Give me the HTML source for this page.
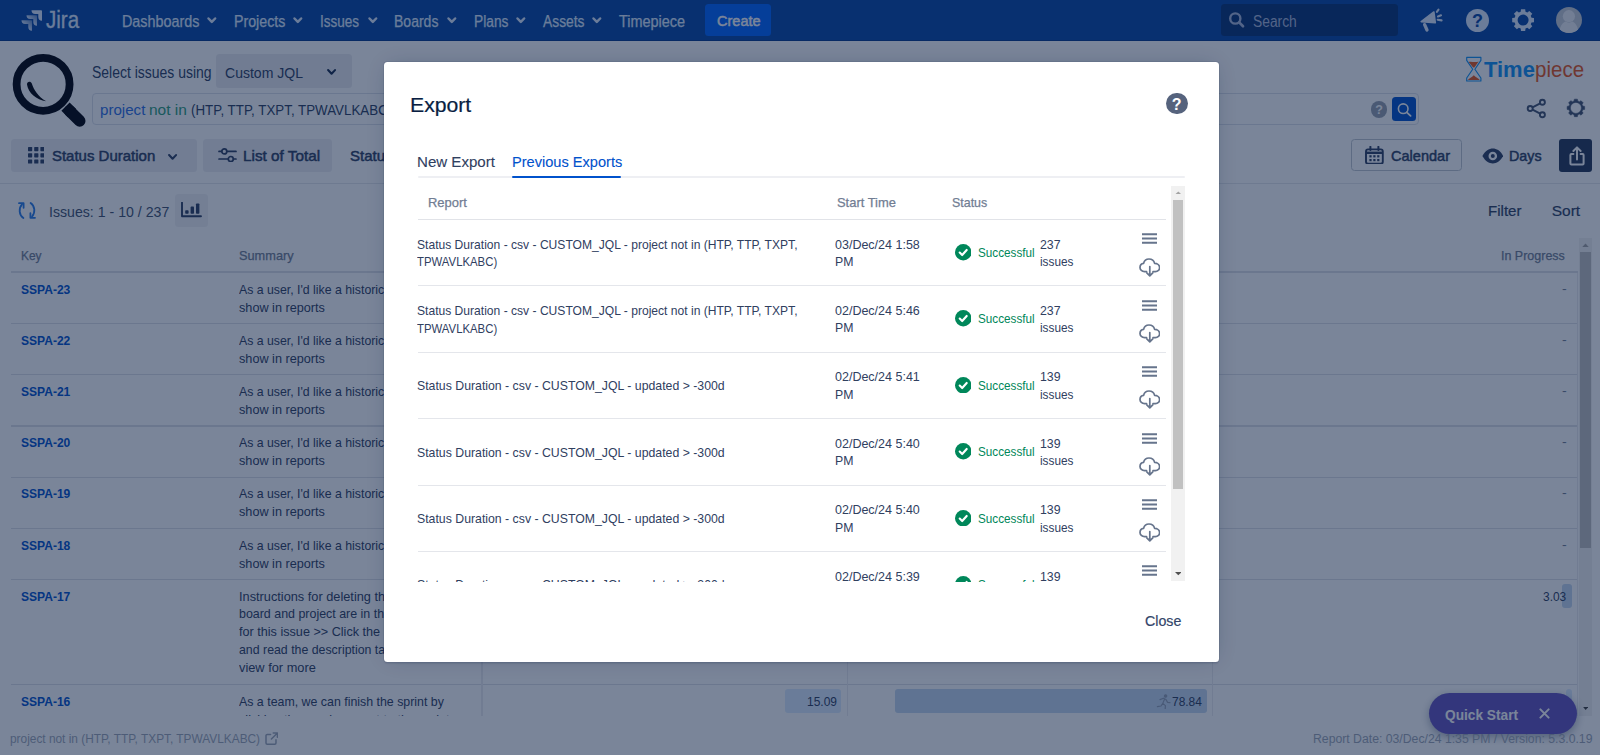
<!DOCTYPE html>
<html lang="en"><head><meta charset="utf-8"><title>Timepiece - Export</title>
<style>
html,body{margin:0;padding:0;}
body{width:1600px;height:755px;overflow:hidden;background:#fff;font-family:"Liberation Sans", sans-serif;position:relative;}
.a{position:absolute;display:block;}
.t{position:absolute;white-space:pre;display:block;transform-origin:0 50%;}
#page,#blanket,#modal{position:absolute;left:0;top:0;width:1600px;height:755px;overflow:hidden;}
#blanket{background:rgba(9,30,66,.54);}
</style></head><body>
<div id="page">
<div class="a" style="left:0px;top:0px;width:1600.00px;height:41.20px;background:#0747A6;"></div>
<div class="a" style="left:0px;top:39.8px;width:1600.00px;height:1.40px;background:#053A8C;"></div>
<svg class="a" style="left:20px;top:9px" width="24.00" height="24.00" viewBox="20 9 24 24"><defs><linearGradient id="jg" x1="1" y1="0" x2="0.35" y2="0.65"><stop offset="0.1" stop-color="#DEEBFF" stop-opacity=".45"/><stop offset="1" stop-color="#DEEBFF"/></linearGradient></defs><path d="M21.5 20.25 a3.7 3.7 0 0 0 3.7 3.7 h3.1 v3.1 a3.7 3.7 0 0 0 3.7 3.7 V21.05 a.8 .8 0 0 0 -.8 -.8Z" fill="url(#jg)"/><path d="M26.5 15.25 a3.7 3.7 0 0 0 3.7 3.7 h3.1 v3.1 a3.7 3.7 0 0 0 3.7 3.7 V16.05 a.8 .8 0 0 0 -.8 -.8Z" fill="url(#jg)"/><path d="M31.5 10.25 a3.7 3.7 0 0 0 3.7 3.7 h3.1 v3.1 a3.7 3.7 0 0 0 3.7 3.7 V11.05 a.8 .8 0 0 0 -.8 -.8Z" fill="#DEEBFF"/></svg>
<svg class="a" style="left:206.32px;top:16.00px" width="11.65" height="8.43" viewBox="-2.50 -2.50 11.65 8.43"><path d="M0 0 L3.33 3.42 L6.65 0" fill="none" stroke="#DEEBFF" stroke-width="2.5" stroke-linecap="round" stroke-linejoin="round"/></svg>
<svg class="a" style="left:292.32px;top:16.00px" width="11.65" height="8.43" viewBox="-2.50 -2.50 11.65 8.43"><path d="M0 0 L3.33 3.42 L6.65 0" fill="none" stroke="#DEEBFF" stroke-width="2.5" stroke-linecap="round" stroke-linejoin="round"/></svg>
<svg class="a" style="left:366.52px;top:16.00px" width="11.65" height="8.43" viewBox="-2.50 -2.50 11.65 8.43"><path d="M0 0 L3.33 3.42 L6.65 0" fill="none" stroke="#DEEBFF" stroke-width="2.5" stroke-linecap="round" stroke-linejoin="round"/></svg>
<svg class="a" style="left:445.93px;top:16.00px" width="11.65" height="8.43" viewBox="-2.50 -2.50 11.65 8.43"><path d="M0 0 L3.33 3.42 L6.65 0" fill="none" stroke="#DEEBFF" stroke-width="2.5" stroke-linecap="round" stroke-linejoin="round"/></svg>
<svg class="a" style="left:515.02px;top:16.00px" width="11.65" height="8.43" viewBox="-2.50 -2.50 11.65 8.43"><path d="M0 0 L3.33 3.42 L6.65 0" fill="none" stroke="#DEEBFF" stroke-width="2.5" stroke-linecap="round" stroke-linejoin="round"/></svg>
<svg class="a" style="left:591.12px;top:16.00px" width="11.65" height="8.43" viewBox="-2.50 -2.50 11.65 8.43"><path d="M0 0 L3.33 3.42 L6.65 0" fill="none" stroke="#DEEBFF" stroke-width="2.5" stroke-linecap="round" stroke-linejoin="round"/></svg>
<div class="a" style="left:705px;top:4px;width:66.20px;height:32.00px;background:#0065FF;border-radius:3.5px;"></div>
<div class="a" style="left:1221.3px;top:4.2px;width:176.40px;height:31.60px;background:#083376;border-radius:3.5px;"></div>
<svg class="a" style="left:1226px;top:10px" width="22.00" height="22.00" viewBox="1226 10 22 22"><circle cx="1235.3" cy="18.5" r="5.1" fill="none" stroke="#A9B8DA" stroke-width="2.4"/><path d="M1239.2 22.4 L1243 26.3" stroke="#A9B8DA" stroke-width="2.7" stroke-linecap="round"/></svg>
<svg class="a" style="left:1418px;top:7px" width="26.00" height="26.00" viewBox="1418 7 26 26"><g fill="#DEEBFF" stroke="#DEEBFF" stroke-linejoin="round"><path d="M1421.2 21.6 L1433.9 12 L1435.3 22.8 Z" stroke-width="1.6"/><path d="M1424.6 24.6 L1427 30" stroke-width="3.3" stroke-linecap="round" fill="none"/></g><g stroke="#DEEBFF" stroke-width="2.1" stroke-linecap="round"><path d="M1436.9 11.8 L1438.5 9.6"/><path d="M1438 16.5 L1441 15.3"/><path d="M1437.7 19.7 L1441.6 20.4"/></g></svg>
<div class="a" style="left:1466px;top:8.8px;width:23.00px;height:23.00px;background:#DEEBFF;border-radius:50%;"></div>
<svg class="a" style="left:1511.00px;top:7.90px" width="24.20" height="24.20" viewBox="-12.10 -12.10 24.20 24.20"><path d="M8.43 -2.42 L10.90 -2.10 L10.90 2.10 L8.43 2.42 L7.67 4.25 L9.19 6.23 L6.23 9.19 L4.25 7.67 L2.42 8.43 L2.10 10.90 L-2.10 10.90 L-2.42 8.43 L-4.25 7.67 L-6.23 9.19 L-9.19 6.23 L-7.67 4.25 L-8.43 2.42 L-10.90 2.10 L-10.90 -2.10 L-8.43 -2.42 L-7.67 -4.25 L-9.19 -6.23 L-6.23 -9.19 L-4.25 -7.67 L-2.42 -8.43 L-2.10 -10.90 L2.10 -10.90 L2.42 -8.43 L4.25 -7.67 L6.23 -9.19 L9.19 -6.23 L7.67 -4.25Z M5.50 0 A5.50 5.50 0 1 0 -5.50 0 A5.50 5.50 0 1 0 5.50 0Z" fill="#DEEBFF" fill-rule="evenodd"/></svg>
<svg class="a" style="left:1556.2px;top:7px" width="26.00" height="26.00" viewBox="0 0 26 26"><defs><clipPath id="av"><circle cx="13" cy="13" r="13"/></clipPath></defs><circle cx="13" cy="13" r="13" fill="#C6CCD6"/><g clip-path="url(#av)" fill="#EEF0F4"><circle cx="12.9" cy="9.2" r="6.1"/><path d="M3.4 27 C3.4 18 7.6 15.4 9.6 14.6 C11.6 16 14.2 16 16.2 14.6 C18.2 15.4 22.4 18 22.4 27 Z"/></g></svg>
<svg class="a" style="left:8px;top:50px" width="84.00" height="82.00" viewBox="8 50 84 82"><circle cx="43.1" cy="84.3" r="26.5" fill="none" stroke="#000208" stroke-width="7.8"/><path d="M69.6 110.8 L79.7 120.9" stroke="#000208" stroke-width="11.6" stroke-linecap="round"/><path d="M65.5 106.7 L72 113.2" stroke="#000208" stroke-width="11.6" stroke-linecap="butt"/><path d="M27 84.6 C26.6 81.6 30.6 80.6 31.8 83.4 C34 90 38 96.4 46.2 101.2 C36.4 100.2 28.2 93 27 84.6Z" fill="#000208"/></svg>
<div class="a" style="left:216px;top:54px;width:136.00px;height:33.60px;background:#EBECF0;border-radius:3.5px;"></div>
<svg class="a" style="left:326.24px;top:68.34px" width="11.11" height="7.83" viewBox="-2.10 -2.10 11.11 7.83"><path d="M0 0 L3.46 3.62 L6.91 0" fill="none" stroke="#172B4D" stroke-width="2.1" stroke-linecap="round" stroke-linejoin="round"/></svg>
<div class="a" style="left:92px;top:93px;width:1326.80px;height:31.80px;box-sizing:border-box;border:1.6px solid #DCE0EA;border-radius:4px;background:#fff;"></div>
<div class="a" style="left:1370.8px;top:101.4px;width:16.20px;height:16.20px;background:#97A0AF;border-radius:50%;"></div>
<div class="a" style="left:1391.6px;top:96.8px;width:24.50px;height:24.70px;background:#0052CC;border-radius:3.5px;"></div>
<svg class="a" style="left:1395px;top:100px" width="20.00" height="20.00" viewBox="1395 100 20 20"><circle cx="1403.2" cy="108.7" r="4.8" fill="none" stroke="#fff" stroke-width="1.6"/><path d="M1406.8 112.3 L1410.6 115.9" stroke="#fff" stroke-width="1.8" stroke-linecap="round"/></svg>
<svg class="a" style="left:1464px;top:54px" width="20.00" height="30.00" viewBox="1464 54 20 30"><path d="M1468.6 62 C1471 60.8 1474.6 63 1478.6 61.6 L1474.4 67.6 H1473.2 Z" fill="#E8571C"/><path d="M1467.8 80 C1469.4 77.6 1471.6 77.8 1473.8 75.2 C1476 77.8 1478.2 77.6 1479.8 80 Z" fill="#E8571C"/><path d="M1466.7 57.4 H1480.9 V60.4 L1474.9 69.2 L1480.9 78 V81 H1466.7 V78 L1472.7 69.2 L1466.7 60.4 Z" fill="none" stroke="#1292F4" stroke-width="1.15" stroke-linejoin="round"/></svg>
<svg class="a" style="left:1525.8px;top:98px" width="21.00" height="21.00" viewBox="0 0 21 21"><g fill="none" stroke="#42526E" stroke-width="1.9"><circle cx="16.4" cy="4.2" r="2.5"/><circle cx="4.2" cy="10.5" r="2.5"/><circle cx="16.4" cy="16.8" r="2.5"/><path d="M6.5 9.3 L14.2 5.3 M6.5 11.7 L14.2 15.7"/></g></svg>
<svg class="a" style="left:1565.80px;top:98.40px" width="19.80" height="19.80" viewBox="-9.90 -9.90 19.80 19.80"><path d="M6.86 -1.90 L8.77 -1.51 L8.77 1.51 L6.86 1.90 L6.20 3.51 L7.27 5.14 L5.14 7.27 L3.51 6.20 L1.90 6.86 L1.51 8.77 L-1.51 8.77 L-1.90 6.86 L-3.51 6.20 L-5.14 7.27 L-7.27 5.14 L-6.20 3.51 L-6.86 1.90 L-8.77 1.51 L-8.77 -1.51 L-6.86 -1.90 L-6.20 -3.51 L-7.27 -5.14 L-5.14 -7.27 L-3.51 -6.20 L-1.90 -6.86 L-1.51 -8.77 L1.51 -8.77 L1.90 -6.86 L3.51 -6.20 L5.14 -7.27 L7.27 -5.14 L6.20 -3.51Z M5.50 0 A5.50 5.50 0 1 0 -5.50 0 A5.50 5.50 0 1 0 5.50 0Z" fill="#42526E" fill-rule="evenodd" stroke="#42526E" stroke-width=".5" stroke-linejoin="round"/></svg>
<div class="a" style="left:11.3px;top:139px;width:185.70px;height:33.00px;background:#EDEEF2;border-radius:3.5px;"></div>
<svg class="a" style="left:27.7px;top:147.2px" width="16.60" height="16.60" viewBox="0 0 16.6 16.6"><g fill="#2E3F62"><rect x="0.0" y="0.0" width="4.2" height="4.2" rx=".6"/><rect x="6.2" y="0.0" width="4.2" height="4.2" rx=".6"/><rect x="12.4" y="0.0" width="4.2" height="4.2" rx=".6"/><rect x="0.0" y="6.2" width="4.2" height="4.2" rx=".6"/><rect x="6.2" y="6.2" width="4.2" height="4.2" rx=".6"/><rect x="12.4" y="6.2" width="4.2" height="4.2" rx=".6"/><rect x="0.0" y="12.4" width="4.2" height="4.2" rx=".6"/><rect x="6.2" y="12.4" width="4.2" height="4.2" rx=".6"/><rect x="12.4" y="12.4" width="4.2" height="4.2" rx=".6"/></g></svg>
<svg class="a" style="left:166.84px;top:152.54px" width="11.11" height="7.83" viewBox="-2.10 -2.10 11.11 7.83"><path d="M0 0 L3.46 3.62 L6.91 0" fill="none" stroke="#2E3F62" stroke-width="2.1" stroke-linecap="round" stroke-linejoin="round"/></svg>
<div class="a" style="left:203px;top:139px;width:129.00px;height:33.00px;background:#EDEEF2;border-radius:3.5px;"></div>
<svg class="a" style="left:217.5px;top:148px" width="19.00" height="14.40" viewBox="0 0 19 14.4"><g fill="none" stroke="#2E3F62" stroke-width="1.7" stroke-linecap="round"><path d="M1 3.4 H3.6 M9 3.4 H18 M1 11 H10 M15.6 11 H18"/><circle cx="6.3" cy="3.4" r="2.5"/><circle cx="12.8" cy="11" r="2.5"/></g></svg>
<div class="a" style="left:1351px;top:139px;width:111.00px;height:32.40px;box-sizing:border-box;border:1px solid #C1C7D0;border-radius:3.5px;"></div>
<svg class="a" style="left:1365.4px;top:145.6px" width="18.80" height="18.80" viewBox="0 0 18.8 18.8"><rect x="1" y="3.4" width="16.8" height="14.4" rx="2" fill="none" stroke="#2E3F62" stroke-width="1.9"/><path d="M1 6.8 H17.8" stroke="#2E3F62" stroke-width="2.4"/><path d="M5.4 .8 V4 M13.4 .8 V4" stroke="#2E3F62" stroke-width="2" stroke-linecap="round"/><g fill="#2E3F62"><rect x="4.4" y="9.2" width="2.2" height="2.2"/><rect x="8.3" y="9.2" width="2.2" height="2.2"/><rect x="12.2" y="9.2" width="2.2" height="2.2"/><rect x="4.4" y="13" width="2.2" height="2.2"/><rect x="8.3" y="13" width="2.2" height="2.2"/><rect x="12.2" y="13" width="2.2" height="2.2"/></g></svg>
<svg class="a" style="left:1481.6px;top:147.6px" width="21.60" height="16.00" viewBox="0 0 21.6 16"><path d="M.4 8 C3.4 2.6 7 .6 10.8 .6 C14.6 .6 18.2 2.6 21.2 8 C18.2 13.4 14.6 15.4 10.8 15.4 C7 15.4 3.4 13.4 .4 8Z" fill="#2E3F62"/><circle cx="10.8" cy="8" r="4.3" fill="#fff"/><circle cx="10.8" cy="8" r="2" fill="#2E3F62"/></svg>
<div class="a" style="left:1559.3px;top:139px;width:32.90px;height:33.00px;background:#253858;border-radius:3px;"></div>
<svg class="a" style="left:1568.5px;top:145.5px" width="16.00" height="20.00" viewBox="0 0 16 20"><g fill="none" stroke="#fff" stroke-width="2" stroke-linejoin="round" stroke-linecap="round"><path d="M4.4 8 H2.4 a1 1 0 0 0 -1 1 V17.6 a1 1 0 0 0 1 1 H13.6 a1 1 0 0 0 1 -1 V9 a1 1 0 0 0 -1 -1 H11.6"/><path d="M8 13.4 V1.8 M4.4 5 L8 1.4 L11.6 5"/></g></svg>
<div class="a" style="left:0px;top:182.6px;width:1600.00px;height:1.00px;background:#E4E6EB;"></div>
<svg class="a" style="left:17.4px;top:200.6px" width="20.00" height="19.00" viewBox="0 0 20 19"><g fill="none" stroke="#2A7DE8" stroke-width="1.8" stroke-linecap="round" stroke-linejoin="round"><path d="M6.4 17 C2 14 1.4 7.4 5 3.4"/><path d="M2 2.2 H6.6 V6.8"/><path d="M13.6 2 C18 5 18.6 11.6 15 15.6"/><path d="M18 16.8 H13.4 V12.2"/></g></svg>
<div class="a" style="left:175px;top:194px;width:32.80px;height:32.60px;background:#F1F2F5;border-radius:3.5px;"></div>
<svg class="a" style="left:181.2px;top:202.4px" width="20.60" height="15.20" viewBox="0 0 20.6 15.2"><path d="M1 .6 V14.2 H20" fill="none" stroke="#2E3F62" stroke-width="1.9" stroke-linecap="round" stroke-linejoin="round"/><g fill="#2E3F62"><rect x="4.2" y="8.2" width="3.4" height="3.6" rx=".8"/><rect x="9.6" y="4.6" width="3.4" height="7.2" rx=".8"/><rect x="15" y="1.4" width="3.4" height="10.4" rx=".8"/></g></svg>
<div class="a" style="left:11px;top:271px;width:1566.50px;height:2.00px;background:#DFE1E6;"></div>
<div class="a" style="left:0;top:273px;width:1600px;height:442.6px;overflow:hidden"><div class="a" style="left:11px;top:49.9px;width:1566.50px;height:1.20px;background:#DFE1E6;"></div><div class="a" style="left:11px;top:101.20000000000002px;width:1566.50px;height:1.20px;background:#DFE1E6;"></div><div class="a" style="left:11px;top:152.4px;width:1566.50px;height:1.20px;background:#DFE1E6;"></div><div class="a" style="left:11px;top:203.70000000000002px;width:1566.50px;height:1.20px;background:#DFE1E6;"></div><div class="a" style="left:11px;top:254.9px;width:1566.50px;height:1.20px;background:#DFE1E6;"></div><div class="a" style="left:11px;top:305.9px;width:1566.50px;height:1.20px;background:#DFE1E6;"></div><div class="a" style="left:11px;top:410.9px;width:1566.50px;height:1.20px;background:#DFE1E6;"></div><div class="a" style="left:481.4px;top:0px;width:1.20px;height:443.00px;background:#EBECF0;"></div><div class="a" style="left:847.1999999999999px;top:0px;width:1.20px;height:443.00px;background:#EBECF0;"></div><div class="a" style="left:1211.8000000000002px;top:0px;width:1.20px;height:443.00px;background:#EBECF0;"></div><div class="a" style="left:1561.6px;top:311px;width:10.00px;height:23.70px;background:#C4D8F0;border-radius:3px;"></div><div class="a" style="left:1566px;top:416.20000000000005px;width:5.60px;height:23.60px;background:#DCECFF;border-radius:3px;"></div><div class="a" style="left:784.8px;top:416.20000000000005px;width:56.20px;height:23.60px;background:#DCECFF;border-radius:3px;"></div><div class="a" style="left:895.4px;top:416.20000000000005px;width:311.40px;height:23.60px;background:#C4D8F0;border-radius:3px;"></div><svg class="a" style="left:1155.6px;top:420.6px" width="15.40" height="15.40" viewBox="0 0 15.4 15.4"><g fill="none" stroke="#95A1B6" stroke-width="1.2" stroke-linecap="round" stroke-linejoin="round"><circle cx="9.6" cy="2" r="1.2" fill="#95A1B6"/><path d="M4 5.6 L7.4 4.2 L10 5.6 L11.6 8.4 L14 8.6 M8.6 5 L6.8 9.4 L9.4 11.6 L9.2 15 M6.8 9.4 L5 12 L1.4 12.6"/></g></svg><div class="a" style="left:0;top:-273px"><span class="t" id="t31" style="left:20.95px;top:282px;font-size:13px;line-height:15px;color:#0052CC;font-weight:700;transform:scaleX(0.9263);">SSPA-23</span>
<span class="t" id="t32" style="left:238.84px;top:282px;font-size:13px;line-height:15px;color:#30405F;font-weight:400;transform:scaleX(0.9460);">As a user, I&#x27;d like a historic</span>
<span class="t" id="t33" style="left:238.84px;top:300px;font-size:13px;line-height:15px;color:#30405F;font-weight:400;transform:scaleX(0.9745);">show in reports</span>
<span class="t" id="t34" style="left:1561.75px;top:281px;font-size:13px;line-height:15px;color:#717D93;font-weight:400;transform:scaleX(1.0843);">-</span>
<span class="t" id="t35" style="left:20.95px;top:333px;font-size:13px;line-height:15px;color:#0052CC;font-weight:700;transform:scaleX(0.9263);">SSPA-22</span>
<span class="t" id="t36" style="left:238.84px;top:333px;font-size:13px;line-height:15px;color:#30405F;font-weight:400;transform:scaleX(0.9460);">As a user, I&#x27;d like a historic</span>
<span class="t" id="t37" style="left:238.84px;top:351px;font-size:13px;line-height:15px;color:#30405F;font-weight:400;transform:scaleX(0.9745);">show in reports</span>
<span class="t" id="t38" style="left:1561.75px;top:332px;font-size:13px;line-height:15px;color:#717D93;font-weight:400;transform:scaleX(1.0843);">-</span>
<span class="t" id="t39" style="left:20.95px;top:384px;font-size:13px;line-height:15px;color:#0052CC;font-weight:700;transform:scaleX(0.9263);">SSPA-21</span>
<span class="t" id="t40" style="left:238.84px;top:384px;font-size:13px;line-height:15px;color:#30405F;font-weight:400;transform:scaleX(0.9460);">As a user, I&#x27;d like a historic</span>
<span class="t" id="t41" style="left:238.84px;top:402px;font-size:13px;line-height:15px;color:#30405F;font-weight:400;transform:scaleX(0.9745);">show in reports</span>
<span class="t" id="t42" style="left:1561.75px;top:383px;font-size:13px;line-height:15px;color:#717D93;font-weight:400;transform:scaleX(1.0843);">-</span>
<span class="t" id="t43" style="left:20.95px;top:435px;font-size:13px;line-height:15px;color:#0052CC;font-weight:700;transform:scaleX(0.9263);">SSPA-20</span>
<span class="t" id="t44" style="left:238.84px;top:435px;font-size:13px;line-height:15px;color:#30405F;font-weight:400;transform:scaleX(0.9460);">As a user, I&#x27;d like a historic</span>
<span class="t" id="t45" style="left:238.84px;top:453px;font-size:13px;line-height:15px;color:#30405F;font-weight:400;transform:scaleX(0.9745);">show in reports</span>
<span class="t" id="t46" style="left:1561.75px;top:434px;font-size:13px;line-height:15px;color:#717D93;font-weight:400;transform:scaleX(1.0843);">-</span>
<span class="t" id="t47" style="left:20.95px;top:486px;font-size:13px;line-height:15px;color:#0052CC;font-weight:700;transform:scaleX(0.9263);">SSPA-19</span>
<span class="t" id="t48" style="left:238.84px;top:486px;font-size:13px;line-height:15px;color:#30405F;font-weight:400;transform:scaleX(0.9460);">As a user, I&#x27;d like a historic</span>
<span class="t" id="t49" style="left:238.84px;top:504px;font-size:13px;line-height:15px;color:#30405F;font-weight:400;transform:scaleX(0.9745);">show in reports</span>
<span class="t" id="t50" style="left:1561.75px;top:485px;font-size:13px;line-height:15px;color:#717D93;font-weight:400;transform:scaleX(1.0843);">-</span>
<span class="t" id="t51" style="left:20.95px;top:538px;font-size:13px;line-height:15px;color:#0052CC;font-weight:700;transform:scaleX(0.9263);">SSPA-18</span>
<span class="t" id="t52" style="left:238.84px;top:538px;font-size:13px;line-height:15px;color:#30405F;font-weight:400;transform:scaleX(0.9460);">As a user, I&#x27;d like a historic</span>
<span class="t" id="t53" style="left:238.84px;top:556px;font-size:13px;line-height:15px;color:#30405F;font-weight:400;transform:scaleX(0.9745);">show in reports</span>
<span class="t" id="t54" style="left:1561.75px;top:537px;font-size:13px;line-height:15px;color:#717D93;font-weight:400;transform:scaleX(1.0843);">-</span>
<span class="t" id="t55" style="left:20.95px;top:589px;font-size:13px;line-height:15px;color:#0052CC;font-weight:700;transform:scaleX(0.9263);">SSPA-17</span>
<span class="t" id="t56" style="left:238.84px;top:589px;font-size:13px;line-height:15px;color:#30405F;font-weight:400;transform:scaleX(0.9815);">Instructions for deleting th</span>
<span class="t" id="t57" style="left:238.84px;top:606px;font-size:13px;line-height:15px;color:#30405F;font-weight:400;transform:scaleX(0.9560);">board and project are in th</span>
<span class="t" id="t58" style="left:238.84px;top:624px;font-size:13px;line-height:15px;color:#30405F;font-weight:400;transform:scaleX(0.9716);">for this issue &gt;&gt; Click the</span>
<span class="t" id="t59" style="left:238.84px;top:642px;font-size:13px;line-height:15px;color:#30405F;font-weight:400;transform:scaleX(0.9492);">and read the description ta</span>
<span class="t" id="t60" style="left:238.84px;top:660px;font-size:13px;line-height:15px;color:#30405F;font-weight:400;transform:scaleX(0.9843);">view for more</span>
<span class="t" id="t61" style="left:1543.14px;top:589px;font-size:13px;line-height:15px;color:#30405F;font-weight:400;transform:scaleX(0.9169);">3.03</span>
<span class="t" id="t62" style="left:20.95px;top:694px;font-size:13px;line-height:15px;color:#0052CC;font-weight:700;transform:scaleX(0.9263);">SSPA-16</span>
<span class="t" id="t63" style="left:238.84px;top:694px;font-size:13px;line-height:15px;color:#30405F;font-weight:400;transform:scaleX(0.9516);">As a team, we can finish the sprint by</span>
<span class="t" id="t64" style="left:238.84px;top:712px;font-size:13px;line-height:15px;color:#30405F;font-weight:400;transform:scaleX(0.9748);">clicking the cog icon next to the sprint</span>
<span class="t" id="t65" style="left:806.94px;top:694px;font-size:13px;line-height:15px;color:#30405F;font-weight:400;transform:scaleX(0.9221);">15.09</span>
<span class="t" id="t66" style="left:1171.55px;top:694px;font-size:13px;line-height:15px;color:#30405F;font-weight:400;transform:scaleX(0.9190);">78.84</span></div></div>
<div class="a" style="left:1579px;top:237.8px;width:13.00px;height:478.20px;background:#F1F1F1;"></div>
<div class="a" style="left:1576.8px;top:273px;width:1.00px;height:442.60px;background:#EBECF0;"></div>
<div class="a" style="left:1580.2px;top:252px;width:10.60px;height:295.90px;background:#C1C1C1;"></div>
<svg class="a" style="left:1582px;top:243.4px" width="7.00" height="4.00" viewBox="0 0 8 5"><path d="M0 5 L4 0.6 L8 5Z" fill="#A3A3A3"/></svg>
<svg class="a" style="left:1582.6px;top:706.6px" width="5.40" height="3.20" viewBox="0 0 8 5"><path d="M0 0 L4 4.6 L8 0Z" fill="#404040"/></svg>
<svg class="a" style="left:264.6px;top:732.4px" width="13.40" height="13.20" viewBox="0 0 13.4 13.2"><g fill="none" stroke="#9EA7B6" stroke-width="1.5" stroke-linecap="round" stroke-linejoin="round"><path d="M5.6 2.4 H2.2 a1.2 1.2 0 0 0 -1.2 1.2 V11 a1.2 1.2 0 0 0 1.2 1.2 H9.8 a1.2 1.2 0 0 0 1.2 -1.2 V7.8"/><path d="M8.2 1 H12.4 V5.2 M12.2 1.2 L6.4 7"/></g></svg>
<div class="a" style="left:1429px;top:692.6px;width:148.40px;height:41.20px;background:#6554C0;border-radius:21px;box-shadow:0 3px 8px rgba(9,30,66,.35);"></div>
<svg class="a" style="left:1539.4px;top:708.2px" width="11.00" height="11.00" viewBox="0 0 11 11"><path d="M1.4 1.4 L9.6 9.6 M9.6 1.4 L1.4 9.6" stroke="#fff" stroke-width="2" stroke-linecap="round"/></svg>
<span class="t" id="t0" style="left:46.08px;top:7px;font-size:23.5px;line-height:26px;color:#DEEBFF;font-weight:400;transform:scaleX(0.8751);-webkit-text-stroke:0.3px currentColor;">Jira</span>
<span class="t" id="t1" style="left:122.14px;top:13px;font-size:16px;line-height:17px;color:#DEEBFF;font-weight:400;transform:scaleX(0.8973);-webkit-text-stroke:0.25px currentColor;">Dashboards</span>
<span class="t" id="t2" style="left:234.24px;top:13px;font-size:16px;line-height:17px;color:#DEEBFF;font-weight:400;transform:scaleX(0.8879);-webkit-text-stroke:0.25px currentColor;">Projects</span>
<span class="t" id="t3" style="left:320.44px;top:13px;font-size:16px;line-height:17px;color:#DEEBFF;font-weight:400;transform:scaleX(0.8458);-webkit-text-stroke:0.25px currentColor;">Issues</span>
<span class="t" id="t4" style="left:394.44px;top:13px;font-size:16px;line-height:17px;color:#DEEBFF;font-weight:400;transform:scaleX(0.8761);-webkit-text-stroke:0.25px currentColor;">Boards</span>
<span class="t" id="t5" style="left:473.94px;top:13px;font-size:16px;line-height:17px;color:#DEEBFF;font-weight:400;transform:scaleX(0.8598);-webkit-text-stroke:0.25px currentColor;">Plans</span>
<span class="t" id="t6" style="left:542.74px;top:13px;font-size:16px;line-height:17px;color:#DEEBFF;font-weight:400;transform:scaleX(0.8647);-webkit-text-stroke:0.25px currentColor;">Assets</span>
<span class="t" id="t7" style="left:619.44px;top:13px;font-size:16px;line-height:17px;color:#DEEBFF;font-weight:400;transform:scaleX(0.9030);-webkit-text-stroke:0.25px currentColor;">Timepiece</span>
<span class="t" id="t8" style="left:716.76px;top:12px;font-size:15.5px;line-height:17px;color:#FFFFFF;font-weight:400;transform:scaleX(0.9367);-webkit-text-stroke:0.5px currentColor;">Create</span>
<span class="t" id="t9" style="left:1253.24px;top:13px;font-size:16px;line-height:17px;color:#A9B8DA;font-weight:400;transform:scaleX(0.8642);">Search</span>
<span class="t" id="t10" style="left:1471.97px;top:11px;font-size:18px;line-height:20px;color:#0747A6;font-weight:700;">?</span>
<span class="t" id="t11" style="left:1375.16px;top:103px;font-size:12.5px;line-height:14px;color:#fff;font-weight:700;">?</span>
<span class="t" id="t12" style="left:91.64px;top:64px;font-size:16px;line-height:17px;color:#2E3F62;font-weight:400;transform:scaleX(0.8726);">Select issues using</span>
<span class="t" id="t13" style="left:224.88px;top:64px;font-size:15px;line-height:17px;color:#2E3F62;font-weight:400;transform:scaleX(0.9351);">Custom JQL</span>
<span class="t" id="t14" style="left:99.77px;top:101px;font-size:15px;line-height:17px;color:#2F6FE4;font-weight:400;transform:scaleX(1.0071);">project</span>
<span class="t" id="t15" style="left:149.07px;top:101px;font-size:15px;line-height:17px;color:#2E9E7B;font-weight:400;transform:scaleX(1.0312);">not in</span>
<span class="t" id="t16" style="left:191.17px;top:101px;font-size:15px;line-height:17px;color:#2E3F62;font-weight:400;transform:scaleX(0.8897);">(HTP, TTP, TXPT, TPWAVLKAB</span>
<span class="t" id="t17" style="left:378.08px;top:101px;font-size:15px;line-height:17px;color:#2E3F62;font-weight:400;">C)</span>
<span class="t" id="t18" style="left:51.88px;top:147px;font-size:15px;line-height:17px;color:#2E3F62;font-weight:400;-webkit-text-stroke:0.5px currentColor;">Status Duration</span>
<span class="t" id="t19" style="left:243.47px;top:147px;font-size:15px;line-height:17px;color:#2E3F62;font-weight:400;transform:scaleX(1.0191);-webkit-text-stroke:0.5px currentColor;">List of Total</span>
<span class="t" id="t20" style="left:350.48px;top:147px;font-size:15px;line-height:17px;color:#2E3F62;font-weight:400;transform:scaleX(1.0038);-webkit-text-stroke:0.5px currentColor;">Status Count</span>
<span class="t" id="t21" style="left:1391.47px;top:147px;font-size:15px;line-height:17px;color:#2E3F62;font-weight:400;transform:scaleX(0.9700);-webkit-text-stroke:0.5px currentColor;">Calendar</span>
<span class="t" id="t22" style="left:1509.27px;top:147px;font-size:15px;line-height:17px;color:#2E3F62;font-weight:400;transform:scaleX(0.9521);-webkit-text-stroke:0.5px currentColor;">Days</span>
<span class="t" id="t23" style="left:1484.11px;top:57px;font-size:22.5px;line-height:25px;color:#1292F4;font-weight:700;transform:scaleX(0.9763);">Time</span>
<span class="t" id="t24" style="left:1534.61px;top:57px;font-size:22.5px;line-height:25px;color:#E8571C;font-weight:400;transform:scaleX(0.9122);">piece</span>
<span class="t" id="t25" style="left:49.08px;top:203px;font-size:15px;line-height:17px;color:#42526E;font-weight:400;transform:scaleX(0.9426);">Issues: 1 - 10 / 237</span>
<span class="t" id="t26" style="left:1488.16px;top:202px;font-size:15.5px;line-height:17px;color:#2E3F62;font-weight:400;transform:scaleX(0.9719);-webkit-text-stroke:0.2px currentColor;">Filter</span>
<span class="t" id="t27" style="left:1551.76px;top:202px;font-size:15.5px;line-height:17px;color:#2E3F62;font-weight:400;-webkit-text-stroke:0.2px currentColor;">Sort</span>
<span class="t" id="t28" style="left:20.95px;top:248px;font-size:13px;line-height:15px;color:#717D93;font-weight:400;transform:scaleX(0.9154);-webkit-text-stroke:0.25px currentColor;">Key</span>
<span class="t" id="t29" style="left:238.84px;top:248px;font-size:13px;line-height:15px;color:#717D93;font-weight:400;transform:scaleX(0.9818);-webkit-text-stroke:0.25px currentColor;">Summary</span>
<span class="t" id="t30" style="left:1500.55px;top:248px;font-size:13px;line-height:15px;color:#717D93;font-weight:400;transform:scaleX(0.9598);-webkit-text-stroke:0.25px currentColor;">In Progress</span>
<span class="t" id="t67" style="left:10.36px;top:732px;font-size:12.5px;line-height:14px;color:#9EA7B6;font-weight:400;transform:scaleX(0.9489);">project not in (HTP, TTP, TXPT, TPWAVLKABC)</span>
<span class="t" id="t68" style="left:1312.56px;top:732px;font-size:12.5px;line-height:14px;color:#9EA7B6;font-weight:400;transform:scaleX(0.9786);">Report Date: 03/Dec/24 1:35 PM / Version: 5.3.0.19</span>
<span class="t" id="t69" style="left:1444.86px;top:706px;font-size:15.5px;line-height:17px;color:#FFFFFF;font-weight:700;transform:scaleX(0.8837);">Quick Start</span>
</div>
<div id="blanket"></div>
<div id="modal">
<div class="a" style="left:384px;top:61.5px;width:835.00px;height:600.80px;background:#fff;border-radius:3.5px;box-shadow:0 0 0 1px rgba(9,30,66,.08),0 2px 1px rgba(9,30,66,.08),0 0 20px -6px rgba(9,30,66,.31);"></div>
<div class="a" style="left:1166.4px;top:93px;width:21.20px;height:21.20px;background:#56637D;border-radius:50%;"></div>
<div class="a" style="left:417.5px;top:176px;width:767.50px;height:2.00px;background:#EEEFF3;border-radius:1px;"></div>
<div class="a" style="left:512.3px;top:175.8px;width:109.20px;height:2.10px;background:#0052CC;border-radius:1px;"></div>
<div class="a" style="left:417.5px;top:218.7px;width:748.50px;height:1.60px;background:#E1E3E8;"></div>
<div class="a" style="left:1171px;top:186px;width:14.00px;height:395.00px;background:#F1F1F1;"></div>
<div class="a" style="left:1173.2px;top:200.3px;width:10.20px;height:289.10px;background:#C1C1C1;"></div>
<svg class="a" style="left:1174.7px;top:190.8px" width="6.60" height="3.60" viewBox="0 0 8 4.2"><path d="M0 4.2 L4 0.4 L8 4.2Z" fill="#A3A3A3"/></svg>
<svg class="a" style="left:1174.7px;top:572.3px" width="6.60" height="3.70" viewBox="0 0 8 4.2"><path d="M0 0 L4 3.8 L8 0Z" fill="#505050"/></svg>
<div class="a" style="left:0;top:220.5px;width:1170px;height:361.5px;overflow:hidden"><div class="a" style="left:0;top:-220.5px"><div class="a" style="left:417.5px;top:285.1px;width:748.50px;height:1.20px;background:#E4E6EB;"></div><svg class="a" style="left:954.7px;top:244.0px" width="16.50" height="16.50" viewBox="0 0 17.2 17.2"><circle cx="8.6" cy="8.6" r="8.6" fill="#00875A"/><path d="M4.9 8.9 L7.5 11.5 L12.2 6.2" fill="none" stroke="#fff" stroke-width="2.2" stroke-linecap="round" stroke-linejoin="round"/></svg><svg class="a" style="left:1141.8px;top:233.3px" width="15.20" height="11.00" viewBox="0 0 15.2 11"><path d="M0 1.2 H15.2 M0 5.5 H15.2 M0 9.8 H15.2" stroke="#66748C" stroke-width="1.9"/></svg><svg class="a" style="left:1138.6px;top:257.5px" width="21.60" height="19.20" viewBox="0 0 21.6 19.2"><g fill="none" stroke="#66748C" stroke-width="1.7" stroke-linecap="round" stroke-linejoin="round"><path d="M7.6 13.6 H5.6 C3 13.6 1 11.8 1 9.4 C1 7.2 2.6 5.6 4.6 5.4 C5.2 2.8 7.4 1 10 1 C12.8 1 15 2.8 15.6 5.4 C18.4 5.4 20.6 7.2 20.6 9.6 C20.6 11.8 18.8 13.6 16.4 13.6 H14"/><path d="M10.8 8.6 V17.6 M7.8 14.8 L10.8 17.8 L13.8 14.8"/></g></svg><div class="a" style="left:417.5px;top:351.57000000000005px;width:748.50px;height:1.20px;background:#E4E6EB;"></div><svg class="a" style="left:954.7px;top:310.4px" width="16.50" height="16.50" viewBox="0 0 17.2 17.2"><circle cx="8.6" cy="8.6" r="8.6" fill="#00875A"/><path d="M4.9 8.9 L7.5 11.5 L12.2 6.2" fill="none" stroke="#fff" stroke-width="2.2" stroke-linecap="round" stroke-linejoin="round"/></svg><svg class="a" style="left:1141.8px;top:299.7px" width="15.20" height="11.00" viewBox="0 0 15.2 11"><path d="M0 1.2 H15.2 M0 5.5 H15.2 M0 9.8 H15.2" stroke="#66748C" stroke-width="1.9"/></svg><svg class="a" style="left:1138.6px;top:323.9px" width="21.60" height="19.20" viewBox="0 0 21.6 19.2"><g fill="none" stroke="#66748C" stroke-width="1.7" stroke-linecap="round" stroke-linejoin="round"><path d="M7.6 13.6 H5.6 C3 13.6 1 11.8 1 9.4 C1 7.2 2.6 5.6 4.6 5.4 C5.2 2.8 7.4 1 10 1 C12.8 1 15 2.8 15.6 5.4 C18.4 5.4 20.6 7.2 20.6 9.6 C20.6 11.8 18.8 13.6 16.4 13.6 H14"/><path d="M10.8 8.6 V17.6 M7.8 14.8 L10.8 17.8 L13.8 14.8"/></g></svg><div class="a" style="left:417.5px;top:418.04px;width:748.50px;height:1.20px;background:#E4E6EB;"></div><svg class="a" style="left:954.7px;top:376.8px" width="16.50" height="16.50" viewBox="0 0 17.2 17.2"><circle cx="8.6" cy="8.6" r="8.6" fill="#00875A"/><path d="M4.9 8.9 L7.5 11.5 L12.2 6.2" fill="none" stroke="#fff" stroke-width="2.2" stroke-linecap="round" stroke-linejoin="round"/></svg><svg class="a" style="left:1141.8px;top:366.1px" width="15.20" height="11.00" viewBox="0 0 15.2 11"><path d="M0 1.2 H15.2 M0 5.5 H15.2 M0 9.8 H15.2" stroke="#66748C" stroke-width="1.9"/></svg><svg class="a" style="left:1138.6px;top:390.3px" width="21.60" height="19.20" viewBox="0 0 21.6 19.2"><g fill="none" stroke="#66748C" stroke-width="1.7" stroke-linecap="round" stroke-linejoin="round"><path d="M7.6 13.6 H5.6 C3 13.6 1 11.8 1 9.4 C1 7.2 2.6 5.6 4.6 5.4 C5.2 2.8 7.4 1 10 1 C12.8 1 15 2.8 15.6 5.4 C18.4 5.4 20.6 7.2 20.6 9.6 C20.6 11.8 18.8 13.6 16.4 13.6 H14"/><path d="M10.8 8.6 V17.6 M7.8 14.8 L10.8 17.8 L13.8 14.8"/></g></svg><div class="a" style="left:417.5px;top:484.51px;width:748.50px;height:1.20px;background:#E4E6EB;"></div><svg class="a" style="left:954.7px;top:443.20000000000005px" width="16.50" height="16.50" viewBox="0 0 17.2 17.2"><circle cx="8.6" cy="8.6" r="8.6" fill="#00875A"/><path d="M4.9 8.9 L7.5 11.5 L12.2 6.2" fill="none" stroke="#fff" stroke-width="2.2" stroke-linecap="round" stroke-linejoin="round"/></svg><svg class="a" style="left:1141.8px;top:432.50000000000006px" width="15.20" height="11.00" viewBox="0 0 15.2 11"><path d="M0 1.2 H15.2 M0 5.5 H15.2 M0 9.8 H15.2" stroke="#66748C" stroke-width="1.9"/></svg><svg class="a" style="left:1138.6px;top:456.70000000000005px" width="21.60" height="19.20" viewBox="0 0 21.6 19.2"><g fill="none" stroke="#66748C" stroke-width="1.7" stroke-linecap="round" stroke-linejoin="round"><path d="M7.6 13.6 H5.6 C3 13.6 1 11.8 1 9.4 C1 7.2 2.6 5.6 4.6 5.4 C5.2 2.8 7.4 1 10 1 C12.8 1 15 2.8 15.6 5.4 C18.4 5.4 20.6 7.2 20.6 9.6 C20.6 11.8 18.8 13.6 16.4 13.6 H14"/><path d="M10.8 8.6 V17.6 M7.8 14.8 L10.8 17.8 L13.8 14.8"/></g></svg><div class="a" style="left:417.5px;top:550.98px;width:748.50px;height:1.20px;background:#E4E6EB;"></div><svg class="a" style="left:954.7px;top:509.6px" width="16.50" height="16.50" viewBox="0 0 17.2 17.2"><circle cx="8.6" cy="8.6" r="8.6" fill="#00875A"/><path d="M4.9 8.9 L7.5 11.5 L12.2 6.2" fill="none" stroke="#fff" stroke-width="2.2" stroke-linecap="round" stroke-linejoin="round"/></svg><svg class="a" style="left:1141.8px;top:498.90000000000003px" width="15.20" height="11.00" viewBox="0 0 15.2 11"><path d="M0 1.2 H15.2 M0 5.5 H15.2 M0 9.8 H15.2" stroke="#66748C" stroke-width="1.9"/></svg><svg class="a" style="left:1138.6px;top:523.1px" width="21.60" height="19.20" viewBox="0 0 21.6 19.2"><g fill="none" stroke="#66748C" stroke-width="1.7" stroke-linecap="round" stroke-linejoin="round"><path d="M7.6 13.6 H5.6 C3 13.6 1 11.8 1 9.4 C1 7.2 2.6 5.6 4.6 5.4 C5.2 2.8 7.4 1 10 1 C12.8 1 15 2.8 15.6 5.4 C18.4 5.4 20.6 7.2 20.6 9.6 C20.6 11.8 18.8 13.6 16.4 13.6 H14"/><path d="M10.8 8.6 V17.6 M7.8 14.8 L10.8 17.8 L13.8 14.8"/></g></svg><div class="a" style="left:417.5px;top:617.45px;width:748.50px;height:1.20px;background:#E4E6EB;"></div><svg class="a" style="left:954.7px;top:576.0px" width="16.50" height="16.50" viewBox="0 0 17.2 17.2"><circle cx="8.6" cy="8.6" r="8.6" fill="#00875A"/><path d="M4.9 8.9 L7.5 11.5 L12.2 6.2" fill="none" stroke="#fff" stroke-width="2.2" stroke-linecap="round" stroke-linejoin="round"/></svg><svg class="a" style="left:1141.8px;top:565.3px" width="15.20" height="11.00" viewBox="0 0 15.2 11"><path d="M0 1.2 H15.2 M0 5.5 H15.2 M0 9.8 H15.2" stroke="#66748C" stroke-width="1.9"/></svg><svg class="a" style="left:1138.6px;top:589.5px" width="21.60" height="19.20" viewBox="0 0 21.6 19.2"><g fill="none" stroke="#66748C" stroke-width="1.7" stroke-linecap="round" stroke-linejoin="round"><path d="M7.6 13.6 H5.6 C3 13.6 1 11.8 1 9.4 C1 7.2 2.6 5.6 4.6 5.4 C5.2 2.8 7.4 1 10 1 C12.8 1 15 2.8 15.6 5.4 C18.4 5.4 20.6 7.2 20.6 9.6 C20.6 11.8 18.8 13.6 16.4 13.6 H14"/><path d="M10.8 8.6 V17.6 M7.8 14.8 L10.8 17.8 L13.8 14.8"/></g></svg><span class="t" id="t78" style="left:417.05px;top:237px;font-size:13px;line-height:15px;color:#30405F;font-weight:400;transform:scaleX(0.9294);">Status Duration - csv - CUSTOM_JQL - project not in (HTP, TTP, TXPT,</span>
<span class="t" id="t79" style="left:417.05px;top:254px;font-size:13px;line-height:15px;color:#30405F;font-weight:400;transform:scaleX(0.8742);">TPWAVLKABC)</span>
<span class="t" id="t80" style="left:835.14px;top:237px;font-size:13px;line-height:15px;color:#30405F;font-weight:400;transform:scaleX(0.9617);">03/Dec/24 1:58</span>
<span class="t" id="t81" style="left:835.14px;top:254px;font-size:13px;line-height:15px;color:#30405F;font-weight:400;transform:scaleX(0.9441);">PM</span>
<span class="t" id="t82" style="left:978.25px;top:245px;font-size:13px;line-height:15px;color:#00875A;font-weight:400;transform:scaleX(0.9004);">Successful</span>
<span class="t" id="t83" style="left:1039.55px;top:237px;font-size:13px;line-height:15px;color:#30405F;font-weight:400;transform:scaleX(0.9496);">237</span>
<span class="t" id="t84" style="left:1039.55px;top:254px;font-size:13px;line-height:15px;color:#30405F;font-weight:400;transform:scaleX(0.9064);">issues</span>
<span class="t" id="t85" style="left:417.05px;top:303px;font-size:13px;line-height:15px;color:#30405F;font-weight:400;transform:scaleX(0.9294);">Status Duration - csv - CUSTOM_JQL - project not in (HTP, TTP, TXPT,</span>
<span class="t" id="t86" style="left:417.05px;top:321px;font-size:13px;line-height:15px;color:#30405F;font-weight:400;transform:scaleX(0.8742);">TPWAVLKABC)</span>
<span class="t" id="t87" style="left:835.14px;top:303px;font-size:13px;line-height:15px;color:#30405F;font-weight:400;transform:scaleX(0.9617);">02/Dec/24 5:46</span>
<span class="t" id="t88" style="left:835.14px;top:320px;font-size:13px;line-height:15px;color:#30405F;font-weight:400;transform:scaleX(0.9441);">PM</span>
<span class="t" id="t89" style="left:978.25px;top:311px;font-size:13px;line-height:15px;color:#00875A;font-weight:400;transform:scaleX(0.9004);">Successful</span>
<span class="t" id="t90" style="left:1039.55px;top:303px;font-size:13px;line-height:15px;color:#30405F;font-weight:400;transform:scaleX(0.9496);">237</span>
<span class="t" id="t91" style="left:1039.55px;top:320px;font-size:13px;line-height:15px;color:#30405F;font-weight:400;transform:scaleX(0.9064);">issues</span>
<span class="t" id="t92" style="left:417.05px;top:378px;font-size:13px;line-height:15px;color:#30405F;font-weight:400;transform:scaleX(0.9453);">Status Duration - csv - CUSTOM_JQL - updated &gt; -300d</span>
<span class="t" id="t93" style="left:835.14px;top:369px;font-size:13px;line-height:15px;color:#30405F;font-weight:400;transform:scaleX(0.9617);">02/Dec/24 5:41</span>
<span class="t" id="t94" style="left:835.14px;top:387px;font-size:13px;line-height:15px;color:#30405F;font-weight:400;transform:scaleX(0.9441);">PM</span>
<span class="t" id="t95" style="left:978.25px;top:378px;font-size:13px;line-height:15px;color:#00875A;font-weight:400;transform:scaleX(0.9004);">Successful</span>
<span class="t" id="t96" style="left:1039.55px;top:369px;font-size:13px;line-height:15px;color:#30405F;font-weight:400;transform:scaleX(0.9496);">139</span>
<span class="t" id="t97" style="left:1039.55px;top:387px;font-size:13px;line-height:15px;color:#30405F;font-weight:400;transform:scaleX(0.9064);">issues</span>
<span class="t" id="t98" style="left:417.05px;top:445px;font-size:13px;line-height:15px;color:#30405F;font-weight:400;transform:scaleX(0.9453);">Status Duration - csv - CUSTOM_JQL - updated &gt; -300d</span>
<span class="t" id="t99" style="left:835.14px;top:436px;font-size:13px;line-height:15px;color:#30405F;font-weight:400;transform:scaleX(0.9617);">02/Dec/24 5:40</span>
<span class="t" id="t100" style="left:835.14px;top:453px;font-size:13px;line-height:15px;color:#30405F;font-weight:400;transform:scaleX(0.9441);">PM</span>
<span class="t" id="t101" style="left:978.25px;top:444px;font-size:13px;line-height:15px;color:#00875A;font-weight:400;transform:scaleX(0.9004);">Successful</span>
<span class="t" id="t102" style="left:1039.55px;top:436px;font-size:13px;line-height:15px;color:#30405F;font-weight:400;transform:scaleX(0.9496);">139</span>
<span class="t" id="t103" style="left:1039.55px;top:453px;font-size:13px;line-height:15px;color:#30405F;font-weight:400;transform:scaleX(0.9064);">issues</span>
<span class="t" id="t104" style="left:417.05px;top:511px;font-size:13px;line-height:15px;color:#30405F;font-weight:400;transform:scaleX(0.9453);">Status Duration - csv - CUSTOM_JQL - updated &gt; -300d</span>
<span class="t" id="t105" style="left:835.14px;top:502px;font-size:13px;line-height:15px;color:#30405F;font-weight:400;transform:scaleX(0.9617);">02/Dec/24 5:40</span>
<span class="t" id="t106" style="left:835.14px;top:520px;font-size:13px;line-height:15px;color:#30405F;font-weight:400;transform:scaleX(0.9441);">PM</span>
<span class="t" id="t107" style="left:978.25px;top:511px;font-size:13px;line-height:15px;color:#00875A;font-weight:400;transform:scaleX(0.9004);">Successful</span>
<span class="t" id="t108" style="left:1039.55px;top:502px;font-size:13px;line-height:15px;color:#30405F;font-weight:400;transform:scaleX(0.9496);">139</span>
<span class="t" id="t109" style="left:1039.55px;top:520px;font-size:13px;line-height:15px;color:#30405F;font-weight:400;transform:scaleX(0.9064);">issues</span>
<span class="t" id="t110" style="left:417.05px;top:577px;font-size:13px;line-height:15px;color:#30405F;font-weight:400;transform:scaleX(0.9453);">Status Duration - csv - CUSTOM_JQL - updated &gt; -300d</span>
<span class="t" id="t111" style="left:835.14px;top:569px;font-size:13px;line-height:15px;color:#30405F;font-weight:400;transform:scaleX(0.9617);">02/Dec/24 5:39</span>
<span class="t" id="t112" style="left:835.14px;top:586px;font-size:13px;line-height:15px;color:#30405F;font-weight:400;transform:scaleX(0.9441);">PM</span>
<span class="t" id="t113" style="left:978.25px;top:577px;font-size:13px;line-height:15px;color:#00875A;font-weight:400;transform:scaleX(0.9004);">Successful</span>
<span class="t" id="t114" style="left:1039.55px;top:569px;font-size:13px;line-height:15px;color:#30405F;font-weight:400;transform:scaleX(0.9496);">139</span>
<span class="t" id="t115" style="left:1039.55px;top:586px;font-size:13px;line-height:15px;color:#30405F;font-weight:400;transform:scaleX(0.9064);">issues</span></div></div>
<span class="t" id="t70" style="left:409.58px;top:93px;font-size:20.5px;line-height:23px;color:#091E42;font-weight:400;transform:scaleX(1.0335);-webkit-text-stroke:0.2px currentColor;">Export</span>
<span class="t" id="t71" style="left:417.38px;top:153px;font-size:15px;line-height:17px;color:#30405F;font-weight:400;transform:scaleX(1.0054);-webkit-text-stroke:0.1px currentColor;">New Export</span>
<span class="t" id="t72" style="left:511.77px;top:153px;font-size:15px;line-height:17px;color:#0052CC;font-weight:400;transform:scaleX(0.9723);-webkit-text-stroke:0.1px currentColor;">Previous Exports</span>
<span class="t" id="t73" style="left:427.75px;top:195px;font-size:13px;line-height:15px;color:#717D93;font-weight:400;transform:scaleX(0.9969);-webkit-text-stroke:0.25px currentColor;">Report</span>
<span class="t" id="t74" style="left:837.14px;top:195px;font-size:13px;line-height:15px;color:#717D93;font-weight:400;transform:scaleX(0.9943);-webkit-text-stroke:0.25px currentColor;">Start Time</span>
<span class="t" id="t75" style="left:952.44px;top:195px;font-size:13px;line-height:15px;color:#717D93;font-weight:400;transform:scaleX(0.9553);-webkit-text-stroke:0.25px currentColor;">Status</span>
<span class="t" id="t76" style="left:1171.74px;top:96px;font-size:16px;line-height:17px;color:#fff;font-weight:700;">?</span>
<span class="t" id="t77" style="left:1145.29px;top:613px;font-size:14.5px;line-height:16px;color:#33456A;font-weight:400;transform:scaleX(0.9794);-webkit-text-stroke:0.2px currentColor;">Close</span>
</div>
</body></html>
